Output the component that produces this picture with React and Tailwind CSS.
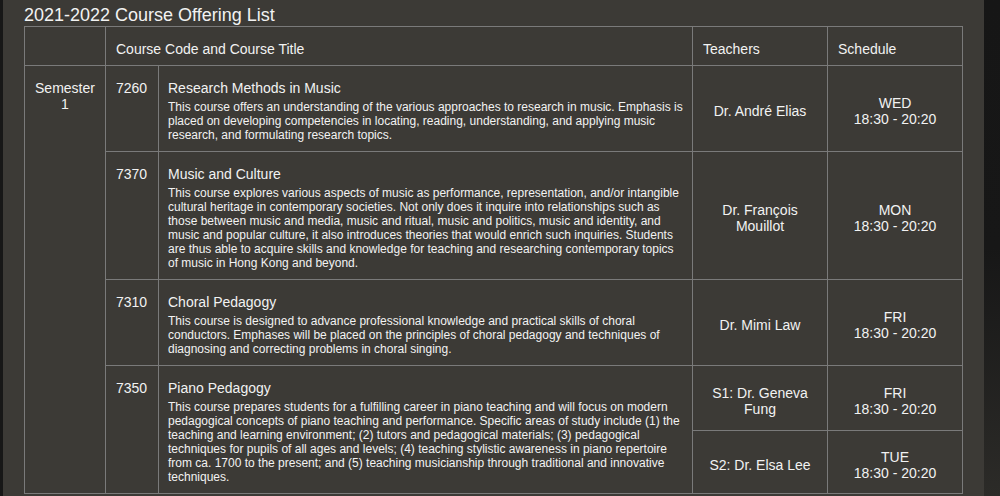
import React from 'react'

const courses = [
  {
    code: '7260',
    title: 'Research Methods in Music',
    desc: 'This course offers an understanding of the various approaches to research in music. Emphasis is placed on developing competencies in locating, reading, understanding, and applying music research, and formulating research topics.',
    slots: [{ teacher: 'Dr. André Elias', day: 'WED', time: '18:30 - 20:20' }],
  },
  {
    code: '7370',
    title: 'Music and Culture',
    desc: 'This course explores various aspects of music as performance, representation, and/or intangible cultural heritage in contemporary societies. Not only does it inquire into relationships such as those between music and media, music and ritual, music and politics, music and identity, and music and popular culture, it also introduces theories that would enrich such inquiries. Students are thus able to acquire skills and knowledge for teaching and researching contemporary topics of music in Hong Kong and beyond.',
    slots: [{ teacher: 'Dr. François Mouillot', day: 'MON', time: '18:30 - 20:20' }],
  },
  {
    code: '7310',
    title: 'Choral Pedagogy',
    desc: 'This course is designed to advance professional knowledge and practical skills of choral conductors. Emphases will be placed on the principles of choral pedagogy and techniques of diagnosing and correcting problems in choral singing.',
    slots: [{ teacher: 'Dr. Mimi Law', day: 'FRI', time: '18:30 - 20:20' }],
  },
  {
    code: '7350',
    title: 'Piano Pedagogy',
    desc: 'This course prepares students for a fulfilling career in piano teaching and will focus on modern pedagogical concepts of piano teaching and performance. Specific areas of study include (1) the teaching and learning environment; (2) tutors and pedagogical materials; (3) pedagogical techniques for pupils of all ages and levels; (4) teaching stylistic awareness in piano repertoire from ca. 1700 to the present; and (5) teaching musicianship through traditional and innovative techniques.',
    slots: [
      { teacher: 'S1: Dr. Geneva Fung', day: 'FRI', time: '18:30 - 20:20' },
      { teacher: 'S2: Dr. Elsa Lee', day: 'TUE', time: '18:30 - 20:20' },
    ],
  },
]

const cell = 'border border-[#7a7a7a] px-[10px] pt-[14px] pb-[9px]'
const head = 'border border-[#7a7a7a] px-[10px] pt-[14px] pb-[8px] text-left font-normal'

export default function App() {
  const totalRows = courses.reduce((acc, c) => acc + c.slots.length, 0)

  return (
    <div
      className="flex h-[496px] overflow-hidden bg-[#3c3a36] text-[#f2f2f2]"
      style={{ fontFamily: '"Liberation Sans", Arial, sans-serif' }}
    >
      <div className="w-[3px] shrink-0 bg-[#171717]" />
      <div className="flex-1 pl-[21px]">
        <h2 className="pt-[5px] text-[18px] leading-[21px]">2021-2022 Course Offering List</h2>
        <table className="w-[938px] table-fixed border-collapse text-[14px] leading-[16px]">
          <colgroup>
            <col className="w-[81px]" />
            <col className="w-[53px]" />
            <col className="w-[534px]" />
            <col className="w-[135px]" />
            <col className="w-[135px]" />
          </colgroup>
          <thead>
            <tr>
              <th className="border border-[#7a7a7a]" />
              <th colSpan={2} className={head}>Course Code and Course Title</th>
              <th className={head}>Teachers</th>
              <th className={head}>Schedule</th>
            </tr>
          </thead>
          <tbody>
            {courses.map((c, ci) =>
              c.slots.map((s, si) => (
                <tr key={c.code + si} className={c.slots.length > 1 && si === 0 ? 'h-[65px]' : ''}>
                  {ci === 0 && si === 0 && (
                    <td rowSpan={totalRows} className={`${cell} px-[6px] text-center align-top`}>
                      Semester 1
                    </td>
                  )}
                  {si === 0 && (
                    <>
                      <td rowSpan={c.slots.length} className={`${cell} align-top`}>{c.code}</td>
                      <td rowSpan={c.slots.length} className={`${cell} pl-[9px] pr-[7px] align-top`}>
                        <div>{c.title}</div>
                        <p className="mt-[4px] text-[12px] leading-[14px]">{c.desc}</p>
                      </td>
                    </>
                  )}
                  <td className={`${cell} text-center align-middle`}>{s.teacher}</td>
                  <td className={`${cell} text-center align-middle`}>
                    <div>{s.day}</div>
                    <div>{s.time}</div>
                  </td>
                </tr>
              ))
            )}
          </tbody>
        </table>
      </div>
      <div className="w-[16px] shrink-0 bg-linear-to-b from-[#161616] via-[#171717] to-[#2c2b28]" />
    </div>
  )
}
